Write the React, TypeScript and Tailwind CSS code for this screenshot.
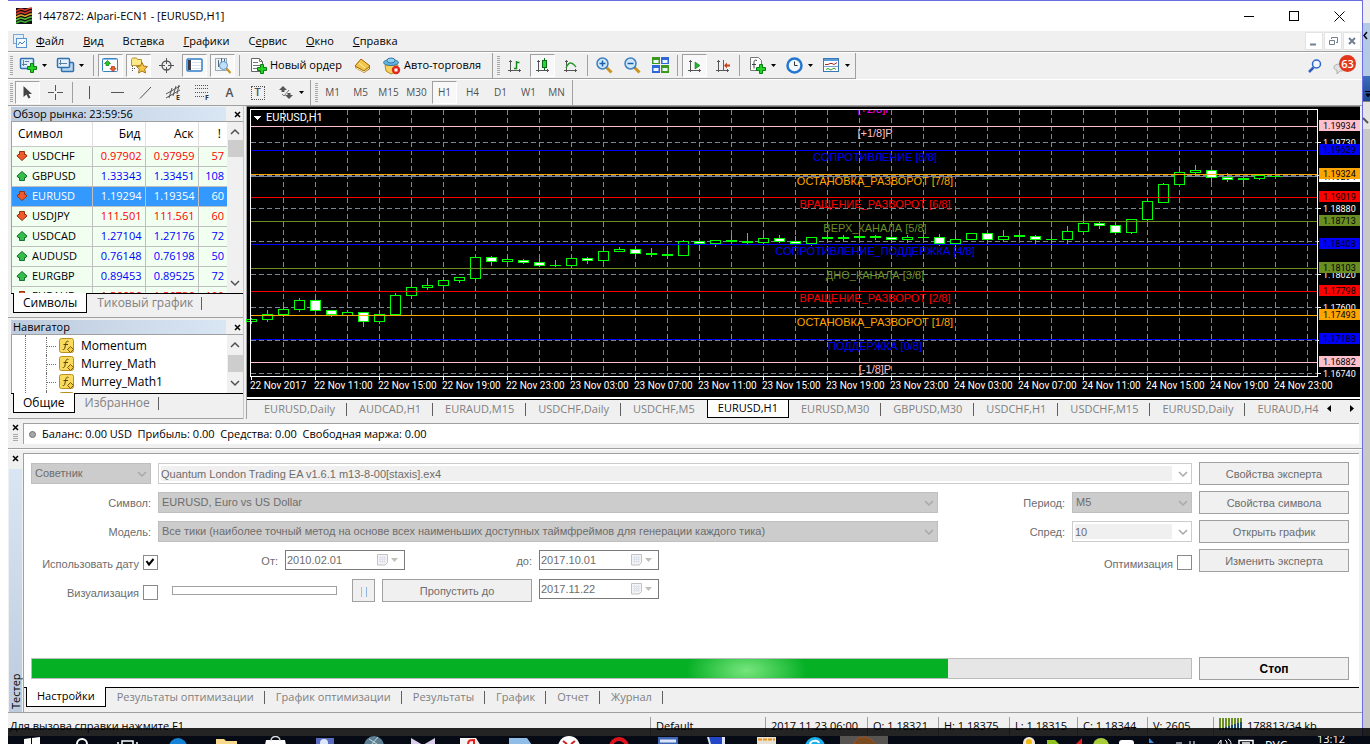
import { useState } from "react";
import type { ReactNode } from "react";
import clsx from "clsx";

/* ---------- data ---------- */

const MENU = [
  ["", "Ф", "айл"],
  ["", "В", "ид"],
  ["Вст", "а", "вка"],
  ["", "Г", "рафики"],
  ["С", "е", "рвис"],
  ["", "О", "кно"],
  ["", "С", "правка"],
];

const PERIODS = ["M1", "M5", "M15", "M30", "H1", "H4", "D1", "W1", "MN"];

const QUOTES = [
  { symbol: "USDCHF", bid: "0.97902", ask: "0.97959", spread: 57, up: false },
  { symbol: "GBPUSD", bid: "1.33343", ask: "1.33451", spread: 108, up: true },
  { symbol: "EURUSD", bid: "1.19294", ask: "1.19354", spread: 60, up: false },
  { symbol: "USDJPY", bid: "111.501", ask: "111.561", spread: 60, up: false },
  { symbol: "USDCAD", bid: "1.27104", ask: "1.27176", spread: 72, up: true },
  { symbol: "AUDUSD", bid: "0.76148", ask: "0.76198", spread: 50, up: true },
  { symbol: "EURGBP", bid: "0.89453", ask: "0.89525", spread: 72, up: true },
  { symbol: "EURAUD", bid: "1.56636", ask: "1.56736", spread: 100, up: false },
];

const INDICATORS = ["Momentum", "Murrey_Math", "Murrey_Math1", "Murrey_Math2"];

const CHART_TABS = [
  "EURUSD,Daily",
  "AUDCAD,H1",
  "EURAUD,M15",
  "USDCHF,Daily",
  "USDCHF,M5",
  "EURUSD,H1",
  "EURUSD,M30",
  "GBPUSD,M30",
  "USDCHF,H1",
  "USDCHF,M15",
  "EURUSD,Daily",
  "EURAUD,H4",
];

const TESTER_TABS = [
  "Настройки",
  "Результаты оптимизации",
  "График оптимизации",
  "Результаты",
  "График",
  "Отчет",
  "Журнал",
];

// Murrey levels: y, colour, caption, price
const LEVELS: [number, string, string, string][] = [
  [-5, "#ff00ff", "[+2/8]P", ""],
  [19, "#ffc0cb", "[+1/8]P", "1.19934"],
  [43, "#0000ff", "СОПРОТИВЛЕНИЕ [8/8]", "1.19629"],
  [67, "#ffa500", "ОСТАНОВКА_РАЗВОРОТ [7/8]", "1.19324"],
  [90, "#ff0000", "ВРАЩЕНИЕ_РАЗВОРОТ [6/8]", "1.19019"],
  [114, "#6b8e23", "ВЕРХ_КАНАЛА [5/8]", "1.18713"],
  [137, "#0000ff", "СОПРОТИВЛЕНИЕ_ПОДДЕРЖКА [4/8]", "1.18408"],
  [161, "#6b8e23", "ДНО_КАНАЛА [3/8]", "1.18103"],
  [184, "#ff0000", "ВРАЩЕНИЕ_РАЗВОРОТ [2/8]", "1.17798"],
  [208, "#ffa500", "ОСТАНОВКА_РАЗВОРОТ [1/8]", "1.17493"],
  [232, "#0000ff", "ПОДДЕРЖКА [0/8]", "1.17188"],
  [255, "#ffc0cb", "[-1/8]P", "1.16882"],
];

const SCALE: [number, string][] = [
  [35, "1.19730"],
  [68, ""],
  [101, "1.18880"],
  [134, ""],
  [167, "1.18020"],
  [200, "1.17600"],
  [233, ""],
  [266, "1.16740"],
];

const TIMES = [
  "22 Nov 2017", "22 Nov 11:00", "22 Nov 15:00", "22 Nov 19:00", "22 Nov 23:00", "23 Nov 03:00",
  "23 Nov 07:00", "23 Nov 11:00", "23 Nov 15:00", "23 Nov 19:00", "23 Nov 23:00", "24 Nov 03:00",
  "24 Nov 07:00", "24 Nov 11:00", "24 Nov 15:00", "24 Nov 19:00", "24 Nov 23:00",
];

// high, body top, body bottom, low, 1 = bearish
const CANDLES = [
  [318, 319, 321, 323, 0], [310, 314, 319, 321, 0], [306, 309, 314, 316, 0], [298, 300, 309, 311, 0],
  [297, 300, 310, 310, 1], [310, 310, 314, 316, 1], [310, 312, 315, 319, 0], [312, 312, 321, 326, 1],
  [311, 314, 321, 323, 0], [293, 295, 314, 314, 0], [278, 287, 295, 298, 0], [278, 285, 287, 289, 0],
  [277, 280, 285, 287, 0], [277, 277, 280, 282, 0], [255, 257, 278, 280, 0], [256, 257, 261, 265, 1],
  [257, 259, 261, 262, 0], [259, 260, 262, 263, 1], [259, 262, 265, 266, 1], [260, 265, 265, 266, 0],
  [257, 258, 265, 267, 0], [257, 258, 260, 263, 1], [247, 251, 260, 262, 0], [247, 249, 251, 251, 0],
  [247, 249, 253, 256, 1], [248, 253, 254, 256, 0], [246, 254, 255, 258, 0], [240, 241, 255, 255, 0],
  [240, 241, 243, 249, 1], [240, 240, 243, 246, 0], [235, 240, 241, 243, 0], [233, 241, 242, 243, 0],
  [235, 238, 242, 244, 0], [235, 238, 241, 242, 1], [236, 241, 243, 243, 1], [237, 237, 243, 245, 0],
  [235, 237, 238, 241, 0], [235, 237, 238, 240, 0], [235, 236, 237, 239, 0], [235, 236, 237, 239, 0],
  [235, 237, 239, 242, 1], [235, 237, 239, 242, 0], [235, 237, 237, 239, 0], [234, 237, 243, 245, 1],
  [235, 239, 243, 249, 0], [233, 233, 239, 239, 0], [233, 233, 239, 243, 1], [230, 236, 239, 240, 0],
  [233, 235, 236, 238, 0], [235, 236, 239, 243, 1], [235, 239, 239, 248, 0], [226, 231, 239, 243, 0],
  [217, 223, 231, 231, 0], [221, 223, 225, 228, 1], [223, 225, 232, 233, 1], [219, 219, 232, 233, 0],
  [199, 201, 219, 221, 0], [183, 184, 202, 202, 0], [169, 172, 184, 184, 0], [165, 170, 172, 175, 0],
  [170, 170, 177, 181, 1], [173, 177, 179, 181, 1], [177, 178, 179, 182, 0], [174, 175, 178, 179, 0],
  [169, 176, 176, 177, 0],
];

/* ---------- icons ---------- */

function Svg({ w = 17, h = 17, children, className }: { w?: number; h?: number; children: ReactNode; className?: string }) {
  return (
    <svg width={w} height={h} viewBox={`0 0 ${w} ${h}`} className={clsx("shrink-0 overflow-visible", className)} aria-hidden="true">
      {children}
    </svg>
  );
}

const Caret = () => (
  <Svg w={5} h={3}>
    <path d="M0 0h5L2.500 3z" fill="#000" />
  </Svg>
);

const Plus = ({ x, y }: { x: number; y: number }) => (
  <path
    transform={`translate(${x} ${y})`}
    d="M3.500.5h3v3h3v3h-3v3h-3v-3h-3v-3h3z"
    fill="#22d322"
    stroke="#0a7d12"
  />
);

const NewChartIcon = () => (
  <Svg>
    <rect x=".5" y="1.500" width="13" height="10" rx="1" fill="#dcecfa" stroke="#2f70b0" strokeWidth="1.500" />
    <path d="M3.500 3v6M2 7.500h5M5 4.500h4" stroke="#5b7fa0" />
    <Plus x={7} y={6} />
  </Svg>
);

const ProfilesIcon = () => (
  <Svg>
    <rect x="4.500" y="5.500" width="12" height="9" rx="1" fill="#b8d6f0" stroke="#2f70b0" strokeWidth="1.500" />
    <rect x=".5" y="1.500" width="12" height="9" rx="1" fill="#e4f0fb" stroke="#2f70b0" strokeWidth="1.500" />
    <path d="M3.500 3v5M2 6.500h8" stroke="#5b7fa0" />
  </Svg>
);

const MarketWatchIcon = () => (
  <Svg>
    <rect x=".5" y="1.500" width="15" height="13" rx="1" fill="#fff" stroke="#3b82c4" />
    <path d="M1 2.500h14" stroke="#8fc0ea" />
    <path d="M5.500 3.500l3 3H7v2H4v-2H2.500z" fill="#2ec42e" stroke="#127a16" strokeWidth=".7" />
    <path d="M11 14.500l3-3h-1.500v-2h-3v2H8z" fill="#f0602c" stroke="#a52a0c" strokeWidth=".7" />
  </Svg>
);

const FolderStarIcon = () => (
  <Svg w={18}>
    <path d="M1.500 2.500l1-1.500h4l1 1.500h4v6h-10z" fill="#fce988" stroke="#b8952a" />
    <path d="M2.500 9v6M4 11.500h2" stroke="#555" strokeDasharray="1 1" />
    <path d="M12 5.500l1.700 3.600 3.800.4-2.800 2.600.8 3.900-3.500-2-3.500 2 .8-3.900-2.800-2.600 3.800-.4z" fill="#f6c945" stroke="#a8761a" />
  </Svg>
);

const CrosshairIcon = () => (
  <Svg>
    <circle cx="8.500" cy="8.500" r="4.500" fill="none" stroke="#555" strokeWidth="1.300" />
    <path d="M8.500 1v6M8.500 10v6M1 8.500h6M10 8.500h6" stroke="#555" />
  </Svg>
);

const NavigatorIcon = () => (
  <Svg>
    <rect x="1" y="2" width="15" height="12" rx="1" fill="#fff" stroke="#2f7fc8" strokeWidth="1.500" />
    <rect x="2" y="3" width="3" height="10" fill="#3b3b4a" />
    <path d="M6 5.500h9M6 8.500h9M6 11.500h9" stroke="#d9e3ec" />
  </Svg>
);

const TesterIcon = () => (
  <Svg w={18}>
    <rect x="1.500" y="1.500" width="11" height="12" fill="#eef3f7" stroke="#9ab" />
    <path d="M4.500 3v7M7.500 1v4M10.500 2v4" stroke="#567" />
    <circle cx="9.500" cy="8.500" r="4" fill="#bfe0f7" stroke="#5a94c6" />
    <path d="M12.500 11.500l4 4.500" stroke="#c9921e" strokeWidth="2" />
  </Svg>
);

const NewOrderIcon = () => (
  <Svg w={18} h={18}>
    <path d="M1.500 1.500h8l3 3v10h-11z" fill="#fff" stroke="#666" />
    <path d="M9.500 1.500v3h3M3 5.500h5M3 8.500h7M3 11.500h5" stroke="#777" fill="none" />
    <Plus x={7} y={7} />
  </Svg>
);

const EditorIcon = () => (
  <Svg>
    <path d="M1 9l6-7 9 7v3l-6 4-9-5z" fill="#a96f10" />
    <path d="M1 9l6-7 9 7-6 5z" fill="#f3c64a" stroke="#a36c10" />
    <path d="M5 6l6 5M1.500 10.500l8.500 4.500 5-4" stroke="#fff1b8" fill="none" />
  </Svg>
);

const AutoTradeIcon = () => (
  <Svg w={18} h={18}>
    <path d="M2 8h13l-2 7-5 2-5-3z" fill="#f4d25c" stroke="#b58a1e" />
    <ellipse cx="8" cy="5.500" rx="7.500" ry="3" fill="#63b3e0" stroke="#3278a6" />
    <ellipse cx="8" cy="3.500" rx="4" ry="2.500" fill="#8fd0f2" stroke="#3278a6" />
    <circle cx="13" cy="13" r="4.200" fill="#e0261a" />
    <rect x="11.500" y="11.500" width="3" height="3" fill="#fff" />
  </Svg>
);

const Axes = () => <path d="M3.500 2v12M1 12.500h13M2 3.500h3M12.500 11v3" stroke="#555" />;

const BarsIcon = () => (
  <Svg w={16} h={16}>
    <Axes />
    <path d="M9.500 3v8M9.500 4.500h3M7 10.500h3" stroke="#138a1c" strokeWidth="1.500" />
  </Svg>
);

const CandlesIcon = () => (
  <Svg w={16} h={16}>
    <Axes />
    <path d="M9.500 0v12" stroke="#0b6d14" />
    <rect x="7.500" y="2.500" width="4" height="7" fill="#27d43c" stroke="#0b6d14" />
  </Svg>
);

const LineIcon = () => (
  <Svg w={16} h={16}>
    <Axes />
    <path d="M3 10C6 3 9 4 13 9" stroke="#1e9a28" strokeWidth="1.300" fill="none" />
  </Svg>
);

const ZoomIcon = ({ plus }: { plus?: boolean }) => (
  <Svg>
    <path d="M10.500 10.500l5 5" stroke="#c9921e" strokeWidth="3" />
    <circle cx="6.500" cy="6.500" r="5.500" fill="#cfe8fa" stroke="#3f7fbe" strokeWidth="1.500" />
    <path d={plus ? "M3.500 6.500h6M6.500 3.500v6" : "M3.500 6.500h6"} stroke="#1f5fa8" strokeWidth="1.500" />
  </Svg>
);

const TileIcon = () => (
  <Svg>
    <rect x="0" y="0" width="8" height="7" fill="#3b9a1e" />
    <rect x="9" y="0" width="8" height="7" fill="#2f67d8" />
    <rect x="0" y="8" width="8" height="8" fill="#2f67d8" />
    <rect x="9" y="8" width="8" height="8" fill="#3b9a1e" />
    <path d="M1.500 4.500h5M10.500 4.500h5M1.500 12.500h5M10.500 12.500h5" stroke="#eef6ff" strokeWidth="3" />
  </Svg>
);

const AutoScrollIcon = () => (
  <Svg w={16} h={16}>
    <Axes />
    <path d="M8 4l5 3.500L8 11z" fill="#23b52e" stroke="#0f7d18" strokeWidth=".6" />
  </Svg>
);

const ShiftIcon = () => (
  <Svg w={16} h={16}>
    <Axes />
    <path d="M8.500 2v10" stroke="#2b6cb0" />
    <path d="M9 7.500l3-3v2h3v2h-3v2z" fill="#c8401c" />
  </Svg>
);

const IndicatorsIcon = () => (
  <Svg w={17} h={18}>
    <path d="M1.500.5h8l3 3v10h-11z" fill="#fff" stroke="#777" />
    <path d="M8 3.500c-2-1-3 0-3 2v6M3 7.500h4" stroke="#444" fill="none" />
    <Plus x={7} y={7} />
  </Svg>
);

const ClockIcon = () => (
  <Svg>
    <circle cx="8.500" cy="8.500" r="7" fill="#f3f8fd" stroke="#2376cf" strokeWidth="2.500" />
    <path d="M8.500 4.500v4h3" stroke="#333" fill="none" />
  </Svg>
);

const TemplateIcon = () => (
  <Svg>
    <rect x=".5" y="1.500" width="15" height="13" fill="#fff" stroke="#3a78b5" />
    <path d="M1 3h14" stroke="#5b9bd8" strokeWidth="2" />
    <path d="M2 7.500h3l2-1h2l2 1 3-2" stroke="#a52a2a" fill="none" />
    <path d="M1 9.500h14" stroke="#7aa7d0" />
    <path d="M3 12.500l2-1 3 1.500 3-2 2 1.500" stroke="#2e9a2e" fill="none" />
  </Svg>
);

const CursorIcon = () => (
  <Svg>
    <path d="M4.500 2v11l3-2.500 2 4 2-1-2-3.500h3.500z" fill="#444" />
  </Svg>
);

const FxIcon = () => (
  <Svg w={16} h={16}>
    <rect x=".5" y=".5" width="14" height="14" rx="2" fill="#f9dc5f" stroke="#b98f22" />
    <path d="M9.500 3.500c-2-1-2.500.5-3 3l-.8 4c-.3 1-1 1.300-2 1M4.500 6.500h4.500" stroke="#5a4208" fill="none" />
    <path d="M11.500 8.500l3 3-3 3-3-3z" fill="#f6cd3c" stroke="#7a5a10" />
  </Svg>
);

const Arrow = ({ up }: { up: boolean }) => (
  <Svg w={12} h={10}>
    <path
      d="M6 .5l5 4.500-1 1.500H8.500v3h-5v-3H2L1 5z"
      transform={up ? undefined : "rotate(180 6 5)"}
      fill={up ? "#35bd4c" : "#ee5a2b"}
      stroke={up ? "#14702a" : "#98300f"}
    />
  </Svg>
);

const Chevron = ({ up, className = "text-[#505050]" }: { up?: boolean; className?: string }) => (
  <Svg w={10} h={6} className={className}>
    <path d={up ? "M1 5l4-4 4 4" : "M1 1l4 4 4-4"} fill="none" stroke="currentColor" strokeWidth="1.500" />
  </Svg>
);

const CloseMark = () => (
  <Svg w={7} h={7}>
    <path d="M1 1l5 5M6 1L1 6" stroke="#000" strokeWidth="1.500" />
  </Svg>
);

/* ---------- toolbar pieces ---------- */

const Grip = () => (
  <span className="mx-[2px] h-[20px] w-[3px] shrink-0 bg-[repeating-linear-gradient(#a8a8a8_0px_1px,#f0f0f0_1px_2px)]" />
);

const Divider = () => <span className="mr-1 ml-px h-[21px] w-px shrink-0 bg-[#a0a0a0]" />;

function Tool({ label, pressed, children }: { label: string; pressed?: boolean; children: ReactNode }) {
  return (
    <button
      aria-label={label}
      aria-pressed={pressed}
      className={clsx(
        "mr-[3px] flex h-[23px] w-[25px] shrink-0 items-center justify-center border text-[10px] text-[#505050]",
        pressed ? "border-t-[#a0a0a0] border-r-white border-b-white border-l-[#a0a0a0] bg-[#f8f8f8]" : "border-transparent",
      )}
    >
      {children}
    </button>
  );
}

function MenuTool({ label, children }: { label: string; children: ReactNode }) {
  return (
    <button aria-label={label} className="flex h-[23px] w-[37px] shrink-0 items-center gap-[5px] pl-[5px]">
      {children}
      <Caret />
    </button>
  );
}

const glyphs = [
  { label: "Вертикальная линия", d: "M8.500 2v13" },
  { label: "Горизонтальная линия", d: "M2 8.500h13" },
  { label: "Трендовая линия", d: "M3 14.500L14 3" },
];

/* ---------- panels ---------- */

function PanelTitle({ children }: { children: ReactNode }) {
  return (
    <div className="flex h-[14px] items-center justify-between pr-[2px] text-[11px] text-black">
      <span className="mr-[8px] flex h-[14px] flex-1 items-center bg-linear-to-r from-[#bccbdd] to-[#d9e6f4] pl-[2px]">
        {children}
      </span>
      <button aria-label="Закрыть">
        <CloseMark />
      </button>
    </div>
  );
}

function PanelTabs({ active, other }: { active: string; other: string }) {
  return (
    <div className="flex h-[21px] border-t border-black pl-[2px] text-[12px]">
      <button className="-mt-px h-[20px] border-r border-b border-l border-black bg-white px-[9px] text-black">{active}</button>
      <button className="flex h-[18px] items-center gap-[8px] pl-[10px] text-[#808080]">
        {other}
        <span className="h-[13px] w-px bg-[#606060]" />
      </button>
    </div>
  );
}

function Scrollbar({ thumb }: { thumb: string }) {
  return (
    <div className="flex w-[16px] shrink-0 flex-col items-center justify-between bg-[#f0f0f0] py-[7px]">
      <Chevron up />
      <span className={clsx("mb-auto w-[15px] bg-[#cdcdcd]", thumb)} />
      <Chevron />
    </div>
  );
}

function MarketWatch() {
  return (
    <section className="border-b border-[#a0a0a0] pt-px pb-[3px] pl-[3px]">
      <PanelTitle>Обзор рынка: 23:59:56</PanelTitle>
      <div className="flex h-[172px] items-start overflow-hidden border-t border-l border-[#a0a0a0] bg-white">
        <table className="flex-1 table-fixed border-collapse text-[11px]">
          <thead>
            <tr className="h-[24px] border-b border-[#c8c8c8] text-[12px]">
              <th className="w-[80px] pl-[6px] text-left font-normal">Символ</th>
              <th className="w-[53px] border-l border-[#e0e0e0] pr-[4px] text-right font-normal">Бид</th>
              <th className="w-[53px] border-l border-[#e0e0e0] pr-[4px] text-right font-normal">Аск</th>
              <th className="border-l border-[#e0e0e0] pr-[6px] text-right font-normal">!</th>
            </tr>
          </thead>
          <tbody>
            {QUOTES.map((q) => {
              const selected = q.symbol === "EURUSD";
              const num = clsx(
                "border-l border-[#c0c0c0] pr-[3px] text-right",
                selected ? "text-white" : q.up ? "text-[#0000ff]" : "text-[#ff0000]",
              );
              return (
                <tr
                  key={q.symbol}
                  className={clsx("h-[20px] border-b border-[#c0c0c0]", selected ? "bg-[#3399ff] text-white" : "bg-[#f0fff0] text-black")}
                >
                  <td className="p-0">
                    <span className="flex items-center gap-[4px] pl-[4px] leading-[18px]">
                      <Arrow up={q.up} />
                      {q.symbol}
                    </span>
                  </td>
                  <td className={num}>{q.bid}</td>
                  <td className={num}>{q.ask}</td>
                  <td className={num}>{q.spread}</td>
                </tr>
              );
            })}
          </tbody>
        </table>
        <div className="flex h-full">
          <Scrollbar thumb="mt-[5px] h-[17px]" />
        </div>
      </div>
      <PanelTabs active="Символы" other="Тиковый график" />
    </section>
  );
}

function Navigator() {
  return (
    <section className="mt-[2px] border-b border-[#a0a0a0] pb-[4px] pl-[3px]">
      <PanelTitle>Навигатор</PanelTitle>
      <div className="flex h-[59px] overflow-hidden border-t border-l border-[#a0a0a0] bg-white">
        <ul className="ml-[13px] flex-1 border-l border-dotted border-[#707070] pt-[2px] text-[12px]">
          {INDICATORS.map((name) => (
            <li key={name} className="ml-[20px] flex h-[18px] items-center border-l border-dotted border-[#707070]">
              <span className="mr-[3px] w-[9px] border-t border-dotted border-[#707070]" />
              <FxIcon />
              <span className="ml-[6px]">{name}</span>
            </li>
          ))}
        </ul>
        <Scrollbar thumb="mt-[7px] h-[17px]" />
      </div>
      <PanelTabs active="Общие" other="Избранное" />
    </section>
  );
}

/* ---------- chart ---------- */

const PLOT_TOP = 107;

function Chart() {
  const columns = Array.from({ length: 33 }, (_, i) => 33 + i * 32);
  return (
    <div className="flex h-[290px] bg-black pl-[3px] [font-family:Roboto,sans-serif]">
      <svg height="290" className="min-w-0 flex-1 overflow-visible" shapeRendering="crispEdges">
        <g stroke="#778899" strokeDasharray="5 3">
          {columns.map((x) => (
            <line key={x} x1={x + 0.5} x2={x + 0.5} y1="3" y2="269" />
          ))}
          {SCALE.map(([y]) => (
            <line key={y} x1="1" x2="100%" y1={y + 0.5} y2={y + 0.5} />
          ))}
        </g>
        <line x1="1" x2="100%" y1="69.500" y2="69.500" stroke="#778899" />
        <g transform={`translate(1 ${-PLOT_TOP})`}>
          {CANDLES.map(([high, top, bottom, low, down], i) => {
            const x = i * 16;
            return (
              <g key={i} fill="#00ff00">
                <rect x={x} y={high} width="1" height={low - high + 1} />
                <rect x={x - 5} y={top} width="11" height={bottom - top + 1} />
                {bottom - top > 1 && (
                  <rect x={x - 4} y={top + 1} width="9" height={bottom - top - 1} fill={down ? "#fff" : "#000"} />
                )}
              </g>
            );
          })}
        </g>
        <g textAnchor="middle" fontSize="11" fontFamily="Liberation Sans">
          {LEVELS.slice(1).map(([y, colour]) => (
            <line key={y} x1="1" x2="100%" y1={y + 0.5} y2={y + 0.5} stroke={colour} />
          ))}
          <svg y="3" height="290" className="overflow-hidden" width="100%">
            {LEVELS.map(([y, colour, caption]) => (
              <text key={y} x="625" y={y + 8} fill={colour}>
                {caption}
              </text>
            ))}
          </svg>
        </g>
        <path d="M4 9h7l-3.500 4z" fill="#fff" />
        <text x="16" y="14" fontSize="11" fill="#fff">
          EURUSD,H1
        </text>
        <g fill="#fff">
          <rect x="0" y="2" width="100%" height="1" />
          <rect x="0" y="269" width="100%" height="1" />
          <rect x="0" y="2" width="1" height="268" />
          <rect x="100%" y="2" width="1" height="268" transform="translate(-1 0)" />
          {TIMES.map((time, i) => (
            <g key={time}>
              <rect x={1 + i * 64} y="270" width="1" height="3" />
              <text x={i * 64} y="282" fontSize="10">
                {time}
              </text>
            </g>
          ))}
        </g>
      </svg>
      <svg width="42" height="290" className="shrink-0" shapeRendering="crispEdges" fontSize="9">
        {SCALE.map(([y, price]) => (
          <g key={y} fill="#fff">
            <rect x="0" y={y} width="3" height="1" />
            <text x="5" y={y + 4}>
              {price}
            </text>
          </g>
        ))}
        <rect x="1" y="64" width="41" height="11" fill="#fff" />
        <text x="5" y="73" fill="#000">
          1.19294
        </text>
        {LEVELS.slice(1).map(([y, colour, , price]) => (
          <g key={y}>
            <rect x="1" y={y - 6} width="41" height="11" fill={colour} />
            <text x="5" y={y + 3} fill="#000">
              {price}
            </text>
          </g>
        ))}
      </svg>
    </div>
  );
}

function ChartTabs() {
  const [active, setActive] = useState(5);
  return (
    <div className="flex h-[20px] overflow-hidden border-t border-black bg-[#f0f0f0] pl-[5px] text-[11px]">
      <div className="flex min-w-0 flex-1 overflow-hidden">
        {CHART_TABS.map((tab, i) => (
          <button
            key={i}
            onClick={() => setActive(i)}
            className={clsx(
              "h-[18px] shrink-0",
              i === active
                ? "border-r border-b border-l border-black bg-white px-[10px] text-black"
                : "flex items-center text-[#808080]",
            )}
          >
            {i === active ? (
              tab
            ) : (
              <>
                <span className="px-[12px]">{tab}</span>
                {i + 1 !== active && <span className="-ml-px h-[13px] w-px bg-[#606060]" />}
              </>
            )}
          </button>
        ))}
      </div>
      <div className="flex w-[33px] shrink-0 items-center justify-between pr-[6px] pb-[3px]">
        <button aria-label="Назад">
          <Svg w={4} h={7}>
            <path d="M4 0v7L0 3.500z" />
          </Svg>
        </button>
        <button aria-label="Вперед">
          <Svg w={4} h={7}>
            <path d="M0 0v7l4-3.500z" />
          </Svg>
        </button>
      </div>
    </div>
  );
}

/* ---------- tester ---------- */

function GreySelect({ id, value, label }: { id: string; value: string; label?: string }) {
  return (
    <div className="relative h-[21px] min-w-0">
      <select
        id={id}
        aria-label={label}
        disabled
        className="h-full w-full appearance-none border border-[#bfbfbf] bg-[#cccccc] pl-[3px] text-[#6d6d6d] opacity-100"
      >
        <option>{value}</option>
      </select>
      <Chevron className="absolute top-[8px] right-[4px] text-[#a8a8a8]" />
    </div>
  );
}

function ComboInput({ id, value, label }: { id: string; value: string; label?: string }) {
  return (
    <div className="relative h-[21px] border border-[#cccccc] bg-white py-[2px] pr-[19px] pl-[2px]">
      <input id={id} aria-label={label} disabled defaultValue={value} className="block h-full w-full bg-[#f0f0f0] text-[#6d6d6d]" />
      <Chevron className="absolute top-[7px] right-[3px] text-[#a8a8a8]" />
    </div>
  );
}

function DateBox({ id, value, label }: { id: string; value: string; label?: string }) {
  return (
    <div className="flex h-[20px] w-[120px] shrink-0 items-center gap-[2px] border border-[#7a7a7a] bg-white px-[1px] pr-[6px]">
      <input id={id} aria-label={label} disabled defaultValue={value} className="h-full min-w-0 flex-1 text-[#6d6d6d]" />
      <Svg w={12} h={12}>
        <path d="M.5.500h10v8l-2.500 2.500h-7.500z" fill="#f4f4f6" stroke="#c4c0c8" />
        <path d="M2 3.500h7M2 5.500h7M2 7.500h7M3.500 2v7M5.500 2v7M7.500 2v7" stroke="#d8dce6" strokeWidth=".7" />
      </Svg>
      <Svg w={7} h={4}>
        <path d="M0 0h7L3.500 4z" fill="#c0c0b8" />
      </Svg>
    </div>
  );
}

function Check({ id, label, checked }: { id: string; label: string; checked?: boolean }) {
  return (
    <div className="flex h-[23px] items-center justify-end gap-[4px] pt-[4px] whitespace-nowrap">
      <label htmlFor={id} className="pt-[3px]">
        {label}
      </label>
      <span className="relative h-[15px] w-[15px] shrink-0">
        <input
          id={id}
          type="checkbox"
          defaultChecked={checked}
          className="peer block h-[15px] w-[15px] appearance-none border border-[#8a8a8a] bg-white"
        />
        <svg className="pointer-events-none absolute inset-0 hidden peer-checked:block" width="15" height="15" aria-hidden="true">
          <path d="M3.500 6l2.500 3.500L10.500 4" fill="none" stroke="#000" strokeWidth="2" />
        </svg>
      </span>
    </div>
  );
}

const greyButton = "h-[23px] border border-[#a0a0a0] bg-[#f0f0f0] pt-[2px] text-[#6d6d6d]";

function Tester() {
  const [tab, setTab] = useState(0);
  const progress = 79;

  return (
    <section className="flex min-h-0 flex-1 border-t border-white pt-[3px] pr-[3px]">
      <div className="flex w-[15px] shrink-0 flex-col items-center">
        <button aria-label="Закрыть тестер" className="mt-[2px] mb-[7px]">
          <CloseMark />
        </button>
        <div className="flex w-[13px] flex-1 items-center bg-linear-to-b from-[#d9e6f4] to-[#bccbdd] pb-[3px] text-[11px] leading-[13px] text-black [writing-mode:vertical-rl]">
          <span className="flex-1 rotate-180">Тестер</span>
        </div>
      </div>
      <div className="flex min-w-0 flex-1 flex-col border-t border-l border-[#a0a0a0] bg-[#f0f0f0]">
        <div className="flex flex-1 flex-col bg-white pt-[8px] pr-[10px] pb-[7px] pl-[7px] text-[11px] text-[#6d6d6d] [font-family:'Liberation_Sans',Arial,sans-serif]">
          <div className="grid grid-cols-[120px_1fr_120px_120px_150px] items-center gap-x-[7px] gap-y-[6px]">
            <GreySelect id="kind" label="Тип" value="Советник" />
            <div className="col-span-3">
              <ComboInput id="expert" label="Эксперт" value="Quantum London Trading EA v1.6.1 m13-8-00[staxis].ex4" />
            </div>
            <button className={greyButton}>Свойства эксперта</button>

            <label htmlFor="symbol" className="pt-[2px] text-right">Символ:</label>
            <GreySelect id="symbol" value="EURUSD, Euro vs US Dollar" />
            <label htmlFor="period" className="pt-[2px] text-right">Период:</label>
            <GreySelect id="period" value="M5" />
            <button className={greyButton}>Свойства символа</button>

            <label htmlFor="model" className="pt-[2px] text-right">Модель:</label>
            <GreySelect
              id="model"
              value="Все тики (наиболее точный метод на основе всех наименьших доступных таймфреймов для генерации каждого тика)"
            />
            <label htmlFor="spread" className="pt-[2px] text-right">Спред:</label>
            <ComboInput id="spread" value="10" />
            <button className={greyButton}>Открыть график</button>

            <div className="-mr-[7px]">
              <Check id="use-date" label="Использовать дату" checked />
            </div>
            <div className="flex items-center gap-[7px] pb-px">
              <label htmlFor="from" className="w-[120px] pt-[2px] text-right">От:</label>
              <DateBox id="from" value="2010.02.01" />
              <label htmlFor="to" className="w-[120px] pt-[2px] text-right">до:</label>
              <DateBox id="to" value="2017.10.01" />
            </div>
            <div className="col-span-2">
              <Check id="optimize" label="Оптимизация" />
            </div>
            <button className={greyButton}>Изменить эксперта</button>

            <div className="-mr-[7px]">
              <Check id="visual" label="Визуализация" />
            </div>
            <div className="flex items-start gap-[7px] pt-px">
              <input
                type="range"
                aria-label="Скорость визуализации"
                className="mr-[8px] ml-[14px] h-[9px] w-[165px] appearance-none self-center border border-[#a0a0a0] bg-white [&::-webkit-slider-thumb]:appearance-none"
              />
              <button aria-label="Пауза" className={clsx(greyButton, "flex w-[23px] items-center justify-center gap-[4px]")}>
                <span className="h-[10px] w-px bg-[#e0b088]" />
                <span className="h-[10px] w-px bg-[#8fb4dc]" />
              </button>
              <button className={clsx(greyButton, "w-[150px]")}>Пропустить до</button>
              <DateBox id="skip" label="Пропустить до даты" value="2017.11.22" />
            </div>
          </div>
          <div className="mt-auto flex items-center gap-[7px]">
            <div role="progressbar" aria-valuenow={progress} className="h-[21px] flex-1 border border-[#bcbcbc] bg-[#e6e6e6]">
              <div
                className="h-full bg-[#06b025] bg-[radial-gradient(ellipse_60px_30px_at_78%_60%,#76e47c_0%,#5cd968_25%,transparent_100%)]"
                style={{ width: `${progress}%` }}
              />
            </div>
            <button className="h-[23px] w-[150px] border border-[#a0a0a0] bg-[#f0f0f0] text-[12px] font-bold text-black">Стоп</button>
          </div>
        </div>
        <div className="flex h-[25px] shrink-0 gap-px border-t border-black pl-[2px] text-[11px]">
          {TESTER_TABS.map((name, i) => (
            <button
              key={name}
              onClick={() => setTab(i)}
              className={clsx(
                "shrink-0",
                i === tab
                  ? "-mt-px h-[20px] border-r border-b border-l border-black bg-white px-[10px] text-black"
                  : "flex h-[19px] items-center text-[#808080]",
              )}
            >
              {i === tab ? (
                name
              ) : (
                <>
                  <span className="px-[10px]">{name}</span>
                  <span className="h-[13px] w-px bg-[#606060]" />
                </>
              )}
            </button>
          ))}
        </div>
      </div>
    </section>
  );
}

function StatusBar() {
  const cells: [string, string][] = [
    ["Default", "w-[115px]"],
    ["2017.11.23 06:00", "w-[102px]"],
    ["O: 1.18321", "w-[71px]"],
    ["H: 1.18375", "w-[71px]"],
    ["L: 1.18315", "w-[68px]"],
    ["C: 1.18344", "w-[70px]"],
    ["V: 2605", "w-[66px]"],
  ];
  return (
    <footer className="flex h-[32px] shrink-0 items-start border-t border-[#a0a0a0] bg-[#f0f0f0] pt-[4px] text-[11px] leading-[18px] text-black">
      <span className="min-w-0 flex-1 truncate pl-[2px]">Для вызова справки нажмите F1</span>
      {cells.map(([text, width]) => (
        <span key={text} className={clsx("shrink-0 overflow-hidden border-l border-[#a0a0a0] pl-[5px] whitespace-nowrap", width)}>
          {text}
        </span>
      ))}
      <span className="flex w-[149px] shrink-0 gap-[4px] border-l border-[#a0a0a0] pl-[5px]">
        <Svg w={24} h={14}>
          {[0, 3, 6, 9, 12, 15, 18, 21].map((x, i) => (
            <g key={x}>
              <rect x={x} y="1" width="2" height={11 - i} fill="#6b8e23" />
              <rect x={x} y={12 - i} width="2" height={1 + i} fill="#1d4e70" />
            </g>
          ))}
        </Svg>
        178813/34 kb
      </span>
    </footer>
  );
}

function Taskbar() {
  return (
    <div className="pointer-events-none fixed right-0 bottom-0 left-[8px] flex h-[16px] overflow-hidden border-t-8 border-[#000000d9] bg-[#060a14] bg-clip-padding">
      <svg height="8" className="min-w-0 flex-1">
        <path d="M16 3l7-1v6h-7zM24 2l8-1v7h-8z" fill="#fff" />
        <circle cx="74" cy="8" r="5" fill="none" stroke="#fff" strokeWidth="2" />
        <path d="M114 8V5h11v3M110 8V6M129 8V6" fill="none" stroke="#fff" strokeWidth="1.500" />
        <circle cx="170" cy="11" r="9" fill="#1584d8" />
        <path d="M208 3h8l2 2h11v4h-21z" fill="#f6d98a" />
        <path d="M258 4h19l1 5h-21z" fill="#fff" />
        <path d="M263 5c0-6 9-6 9 0" fill="none" stroke="#ddd" strokeWidth="1.500" />
        <rect x="308" y="2" width="18" height="8" fill="#5a6cc0" />
        <circle cx="316" cy="7" r="4" fill="#dfe7fb" />
        <circle cx="366" cy="10" r="10" fill="#5d7f93" />
        <path d="M361 3l8 5M370 1l-6 7" stroke="#c8d8d8" />
        <path d="M403 2l12 7 12-7v8h-24z" fill="#d9cfea" />
        <path d="M452 2h16l5 8h-21z" fill="#f3f3f3" />
        <path d="M460 9c0-5 2-5 6-5v5" fill="none" stroke="#e8201c" strokeWidth="2" />
        <path d="M501 2h18l5 7h-23z" fill="#8fbde8" />
        <circle cx="561" cy="11" r="11" fill="#fff" />
        <path d="M555 5l4 3M567 5l-4 3" stroke="#c22" strokeWidth="2" />
        <circle cx="611" cy="11" r="8" fill="none" stroke="#e0141e" strokeWidth="4" />
        <rect x="650" y="1" width="20" height="8" fill="#3f66b5" />
        <path d="M652 5h16" stroke="#dbe6fa" strokeWidth="3" />
        <path d="M699 1h18v7h-16z" fill="#dfe4f2" />
        <path d="M701 1h13v7h-11z" fill="#2347c8" />
        <rect x="749" y="1" width="19" height="8" fill="#e8e2d6" />
        <path d="M750 3.500h17" stroke="#e8941c" strokeWidth="2" strokeDasharray="4 1" />
        <circle cx="807" cy="11" r="10" fill="#1bb0ee" />
        <path d="M802 8c1-4 8-4 9-1" fill="none" stroke="#fff" strokeWidth="2" />
        <rect x="832" y="0" width="48" height="8" fill="#575452" />
        <path d="M846 8c2-6 7-7 10-7s9 2 11 7" fill="#7a4a20" stroke="#b5531c" strokeDasharray="2 1" />
      </svg>
      <svg width="362" height="8" className="shrink-0">
        <circle cx="21" cy="7" r="6" fill="#f1e9dd" />
        <circle cx="21" cy="6" r="3" fill="#f2b80c" />
        <path d="M39 4h8l4 4H39z" fill="#8fc31f" />
        <path d="M68 8l6-6v6z" fill="#e02020" />
        <circle cx="93" cy="10" r="8" fill="#a8cc3a" />
        <rect x="111" y="4" width="15" height="6" rx="3" fill="#fff" />
        <path d="M141 2l5 5h-5z" fill="#3b8ae0" />
        <path d="M168 7h6M182 5v3M186 5v3" stroke="#fff" />
        <path d="M210 8l3-4v4M217 4c2 1 2 3 2 4M220 3c2 1 3 3 3 5" stroke="#fff" fill="none" />
        <path d="M231 8V4.500h14V8M234 7h8" stroke="#fff" fill="none" strokeWidth="1.500" />
        <text x="257" y="14" fill="#fff" fontSize="12">РУС</text>
      </svg>
      <time className="absolute -top-[5px] right-[25px] text-[11px] leading-[15px] text-white">13:12</time>
    </div>
  );
}

/* ---------- window ---------- */

export default function App() {
  const [period, setPeriod] = useState("H1");

  return (
    <div className="flex h-screen min-h-[700px] overflow-hidden bg-white pl-[8px] text-black [font-family:'Open_Sans','Noto_Sans',sans-serif]">
      <div className="flex min-w-0 flex-1 flex-col border-t border-r border-[#6a6ee0] bg-[#f0f0f0]">
        <header className="flex h-[30px] shrink-0 items-center bg-white pr-[17px] pl-[8px]">
          <Svg w={16} h={16} className="overflow-hidden">
            <rect width="16" height="16" fill="#111" />
            {[2, 5, 8, 11, 14].map((y, i) => (
              <path
                key={y}
                d={`M0 ${y + 1}c3-1 3-2 5-2s3 2 5 1 3-2 6-2`}
                fill="none"
                stroke={["#e03a2c", "#e03a2c", "#e0a82c", "#5cc43a", "#3ab03a"][i]}
                strokeWidth="1.500"
              />
            ))}
          </Svg>
          <h1 className="ml-[5px] flex-1 text-[11px]">1447872: Alpari-ECN1 - [EURUSD,H1]</h1>
          <div className="flex items-center gap-[34px]">
            <button aria-label="Свернуть">
              <Svg w={11} h={11}><path d="M0 5.500h10" stroke="#000" /></Svg>
            </button>
            <button aria-label="Развернуть">
              <Svg w={11} h={11}><rect x=".5" y=".5" width="9" height="9" fill="none" stroke="#000" /></Svg>
            </button>
            <button aria-label="Закрыть">
              <Svg w={11} h={11}><path d="M.5.500l10 10M10.500.5l-10 10" stroke="#000" /></Svg>
            </button>
          </div>
        </header>

        <nav className="flex h-[21px] shrink-0 items-center gap-px border-b border-[#a0a0a0] pl-[4px] text-[11px]">
          <Svg w={16} h={16} className="-mr-[2px]">
            <rect x="1.500" y="1.500" width="10" height="9" fill="#e4f0fb" stroke="#7fa8d0" />
            <rect x="4.500" y="5.500" width="10" height="9" fill="#f4f9fe" stroke="#5b93cc" />
            <path d="M6 12l2-3 2 2 3-3" fill="none" stroke="#4a80b8" />
          </Svg>
          {MENU.map(([before, key, after]) => (
            <button key={before + key + after} className="px-[9px]">
              {before}
              <u>{key}</u>
              {after}
            </button>
          ))}
          <div className="ml-auto flex gap-[1px] pr-[1px]">
            {["M4 11.500h6", "M6.500 6V4.500h6v5H11M4.500 7.500h5v4h-5z", "M5 5l6 6M11 5l-6 6"].map((d, i) => (
              <button
                key={d}
                aria-label={["Свернуть график", "Восстановить график", "Закрыть график"][i]}
                className="flex h-[18px] w-[18px] items-center justify-center border border-[#e3e3e3] bg-white"
              >
                <Svg w={16} h={16}><path d={d} fill="none" stroke="#708090" strokeWidth={i === 1 ? 1 : 2} /></Svg>
              </button>
            ))}
          </div>
        </nav>

        <div className="flex h-[27px] shrink-0 items-center border-t border-white">
          <div className="flex h-full items-center border-r border-b border-[#a0a0a0]">
            <Grip />
            <MenuTool label="Новый график"><NewChartIcon /></MenuTool>
            <MenuTool label="Профили"><ProfilesIcon /></MenuTool>
            <span className="mx-1 h-[21px] w-px shrink-0 bg-[#a0a0a0]" />
            <Tool label="Обзор рынка" pressed><MarketWatchIcon /></Tool>
            <Tool label="Избранное" pressed><FolderStarIcon /></Tool>
            <Tool label="Окно данных"><CrosshairIcon /></Tool>
            <Tool label="Навигатор" pressed><NavigatorIcon /></Tool>
            <Tool label="Тестер стратегий" pressed><TesterIcon /></Tool>
            <Divider />
            <button className="flex w-[106px] items-center gap-[2px] pl-[6px] text-[11px] whitespace-nowrap">
              <NewOrderIcon />
              Новый ордер
            </button>
            <Tool label="MetaEditor"><EditorIcon /></Tool>
            <button className="flex w-[114px] items-center gap-[3px] pl-[5px] text-[11px] whitespace-nowrap">
              <AutoTradeIcon />
              Авто-торговля
            </button>
          </div>
          <div className="flex h-full items-center border-r border-b border-[#a0a0a0] pl-[2px]">
            <Grip />
            <Tool label="Бары"><BarsIcon /></Tool>
            <Tool label="Японские свечи" pressed><CandlesIcon /></Tool>
            <Tool label="Линия"><LineIcon /></Tool>
            <Divider />
            <Tool label="Увеличить"><ZoomIcon plus /></Tool>
            <Tool label="Уменьшить"><ZoomIcon /></Tool>
            <Tool label="Расположить окна"><TileIcon /></Tool>
            <Divider />
            <Tool label="Автопрокрутка" pressed><AutoScrollIcon /></Tool>
            <Tool label="Сдвиг графика"><ShiftIcon /></Tool>
            <Divider />
            <MenuTool label="Индикаторы"><IndicatorsIcon /></MenuTool>
            <MenuTool label="Периоды"><ClockIcon /></MenuTool>
            <MenuTool label="Шаблоны"><TemplateIcon /></MenuTool>
          </div>
          <div className="ml-auto flex items-center gap-[10px] pr-[6px]">
            <button aria-label="Поиск">
              <Svg w={14} h={14}>
                <circle cx="8.500" cy="5" r="4" fill="#f5f9ff" stroke="#2f67c8" strokeWidth="1.500" />
                <path d="M5.500 8.500l-4.500 4.500" stroke="#2f5fc0" strokeWidth="2.500" />
              </Svg>
            </button>
            <button aria-label="Сообщения" className="relative h-[22px] w-[24px]">
              <svg width="16" height="16" className="absolute bottom-[1px] left-0" aria-hidden="true">
                <path d="M2 7c0-4 12-4 12 0s-4 4-6 4l-3 3v-4c-2 0-3-1-3-3z" fill="#e2e2e2" stroke="#b0b0b0" />
              </svg>
              <span className="absolute top-0 right-0 h-[17px] w-[17px] rounded-full bg-[#e0371d] text-center text-[11px] leading-[17px] font-semibold text-white">
                63
              </span>
            </button>
          </div>
        </div>

        <div className="flex h-[27px] shrink-0 items-center border-t border-b border-t-white border-b-[#a0a0a0]">
          <div className="flex h-full items-center border-r border-[#a0a0a0]">
            <Grip />
            <Tool label="Курсор" pressed><CursorIcon /></Tool>
            <Tool label="Перекрестие">
              <Svg><path d="M8.500 1v6M8.500 10v6M1 8.500h6M10 8.500h6" stroke="#555" /></Svg>
            </Tool>
            <Divider />
            {glyphs.map((g) => (
              <Tool key={g.label} label={g.label}>
                <Svg><path d={g.d} stroke="#555" /></Svg>
              </Tool>
            ))}
            <Tool label="Равноудаленный канал">
              <Svg>
                <path d="M1 10l14-8M1 14l14-8M4 14l3-10M8 12l3-10M12 10l2-9" stroke="#555" />
                <text x="11" y="16" fontSize="7" fill="#333" fontWeight="700">E</text>
              </Svg>
            </Tool>
            <Tool label="Уровни Фибоначчи">
              <Svg>
                <path d="M2 1.500h13M2 4.500h13M2 8.500h13M2 12.500h9" stroke="#555" strokeDasharray="1 1" />
                <text x="12" y="16" fontSize="7" fill="#333" fontWeight="700">F</text>
              </Svg>
            </Tool>
            <Tool label="Текст"><span className="text-[12px] font-semibold">A</span></Tool>
            <Tool label="Текстовая метка">
              <span className="flex h-[14px] w-[14px] items-center justify-center border border-dotted border-[#555] text-[11px] font-semibold">T</span>
            </Tool>
            <MenuTool label="Стрелки">
              <Svg w={16}>
                <path d="M5 2l4 4H6.500v2h-3V6H1zM11 15l-4-4h2.500V9h3v2H15z" fill="#555" />
                <path d="M4 10l2 2 5-6" fill="none" stroke="#777" />
              </Svg>
            </MenuTool>
          </div>
          <div className="flex h-full items-center border-r border-[#a0a0a0] pl-[2px]">
            <Grip />
            {PERIODS.map((p) => (
              <button
                key={p}
                onClick={() => setPeriod(p)}
                className={clsx(
                  "mr-[3px] h-[23px] w-[25px] shrink-0 border text-[10px] text-[#505050]",
                  p === period
                    ? "border-t-[#a0a0a0] border-r-white border-b-white border-l-[#a0a0a0] bg-[#f8f8f8]"
                    : "border-transparent",
                )}
              >
                {p}
              </button>
            ))}
          </div>
        </div>

        <div className="flex shrink-0">
          <aside className="w-[236px] shrink-0 border-r border-[#c8c8c8]">
            <MarketWatch />
            <Navigator />
          </aside>
          <main className="ml-[2px] min-w-0 flex-1 border-l border-[#a0a0a0] bg-[#f0f0f0] pr-[2px]">
            <div className="border-t border-[#696969]">
              <Chart />
            </div>
            <div className="h-[2px] bg-white" />
            <ChartTabs />
          </main>
        </div>

        <div className="flex h-[30px] shrink-0 border-b border-[#a0a0a0] pt-[4px] pr-[3px] pb-[4px]">
          <div className="flex w-[15px] flex-col items-center gap-[3px] pt-px">
            <CloseMark />
            <span className="h-[8px] w-[5px] bg-[repeating-linear-gradient(#a8a8a8_0px_1px,#f0f0f0_1px_2px)]" />
          </div>
          <p className="flex flex-1 items-center border-t border-l border-[#a0a0a0] bg-white pl-[5px] text-[11px] whitespace-pre">
            <span className="mr-[6px] h-[7px] w-[7px] rounded-full border border-[#707070] bg-[#a8a8a8]" />
            {"Баланс: 0.00 USD  Прибыль: 0.00  Средства: 0.00  Свободная маржа: 0.00"}
          </p>
        </div>

        <Tester />
        <StatusBar />
      </div>

      {/* sliver of the window behind */}
      <div className="flex w-[7px] shrink-0 flex-col">
        <div className="h-[23px] bg-[#eeeeee]" />
        <div className="h-[53px] bg-[#b4c9e6] pt-[9px]">
          <Svg w={5} h={7}><path d="M4 0L1 3.500 4 7" fill="none" stroke="#000" strokeWidth="1.500" /></Svg>
        </div>
        <div className="h-[25px] bg-linear-to-b from-[#3d6cc0] to-[#1d478f] pt-[15px]">
          <Svg w={7} h={6}><path d="M2 .5h5M3 3l2 3 2-3z" fill="#000" stroke="#000" /></Svg>
        </div>
        <div className="h-[28px] border-t border-[#808080] bg-[#e4e4e4] pt-[16px]">
          <Svg w={6} h={6}><path d="M0 0l5 5" stroke="#555" strokeWidth="2" /></Svg>
        </div>
        <div className="flex-1 bg-[#c8c8c8]" />
      </div>

      <Taskbar />
    </div>
  );
}
